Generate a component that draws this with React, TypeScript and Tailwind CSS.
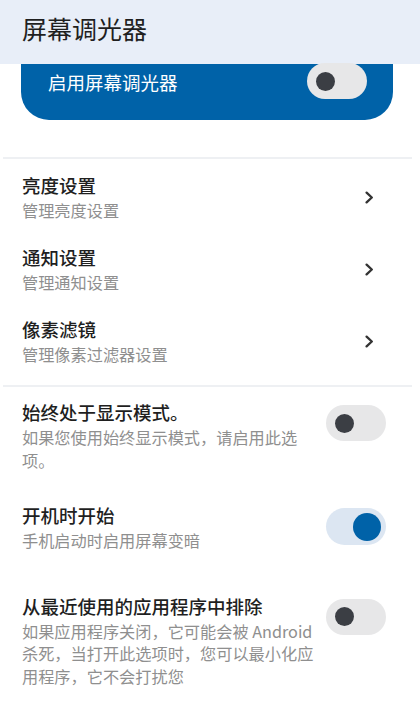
import React from "react";

const FONT = { fontFamily: '"Noto Sans CJK SC", "Noto Sans", sans-serif' };

const LINKS = [
  { title: "亮度设置", sub: "管理亮度设置" },
  { title: "通知设置", sub: "管理通知设置" },
  { title: "像素滤镜", sub: "管理像素过滤器设置" },
];

function Toggle({ on }: { on?: boolean }) {
  if (on) {
    return (
      <div className="w-[60px] h-[37px] shrink-0 rounded-full bg-[#dce6f2] flex items-center justify-end pr-[5px]">
        <div className="w-[28px] h-[28px] rounded-full bg-[#0062a8]" />
      </div>
    );
  }
  return (
    <div className="w-[60px] h-[36px] shrink-0 rounded-full bg-[#e7e7e8] flex items-center pl-[9px]">
      <div className="w-[19px] h-[19px] rounded-full bg-[#3b3e44]" />
    </div>
  );
}

function Chevron() {
  return (
    <svg width="9" height="13" viewBox="0 0 9 13" fill="none">
      <path d="M1.6 1.6 L6.8 6.5 L1.6 11.4" stroke="#333" strokeWidth="2.3" strokeLinecap="round" strokeLinejoin="round" />
    </svg>
  );
}

function SwitchRow({ title, sub, on, className }: { title: string; sub: string; on?: boolean; className?: string }) {
  return (
    <div className={`flex items-start pl-[22px] ${className ?? ""}`}>
      <div className="w-[300px]">
        <div className="text-[18.5px] leading-[24px] font-medium text-[#1f1f1f]">{title}</div>
        <div className="mt-[2px] text-[16.2px] leading-[22.5px] text-[#8f8f8f]">{sub}</div>
      </div>
      <div className="ml-[4px] mt-[5px]">
        <Toggle on={on} />
      </div>
    </div>
  );
}

export default function App() {
  return (
    <div className="w-[420px] h-[713px] overflow-hidden bg-white" style={FONT}>
      {/* top bar */}
      <div className="h-16 bg-[#e8eef8] flex items-center pl-[22px] pb-[6px]">
        <span className="text-[25px] text-[#1f1f1f]">屏幕调光器</span>
      </div>

      {/* master switch card, scrolled under the bar */}
      <div className="ml-[21px] w-[372px] h-[56px] bg-[#0062a8] rounded-b-[28px] flex items-start justify-between pl-[27px] pr-[26px]">
        <span className="mt-[6px] text-[18.5px] leading-[24px] text-white">启用屏幕调光器</span>
        <div className="-mt-[1px]">
          <Toggle />
        </div>
      </div>

      <div className="mt-[37px] ml-[3px] mr-[8px] h-[2px] bg-[#eef0f3]" />

      <div className="mt-[2px]">
        {LINKS.map((l) => (
          <div key={l.title} className="flex items-center justify-between pl-[22px] pr-[46px] py-3">
            <div>
              <div className="text-[18.5px] leading-[24px] font-medium text-[#1f1f1f]">{l.title}</div>
              <div className="mt-[2px] text-[16.2px] leading-[22px] text-[#8f8f8f]">{l.sub}</div>
            </div>
            <Chevron />
          </div>
        ))}
      </div>

      <div className="mt-[8px] ml-[3px] mr-[8px] h-[2px] bg-[#eef0f3]" />

      <SwitchRow className="mt-[13px]" title="始终处于显示模式。" sub="如果您使用始终显示模式，请启用此选项。" />
      <SwitchRow className="mt-[32px]" title="开机时开始" sub="手机启动时启用屏幕变暗" on />
      <SwitchRow
        className="mt-[42px]"
        title="从最近使用的应用程序中排除"
        sub="如果应用程序关闭，它可能会被 Android 杀死，当打开此选项时，您可以最小化应用程序，它不会打扰您"
      />
    </div>
  );
}
